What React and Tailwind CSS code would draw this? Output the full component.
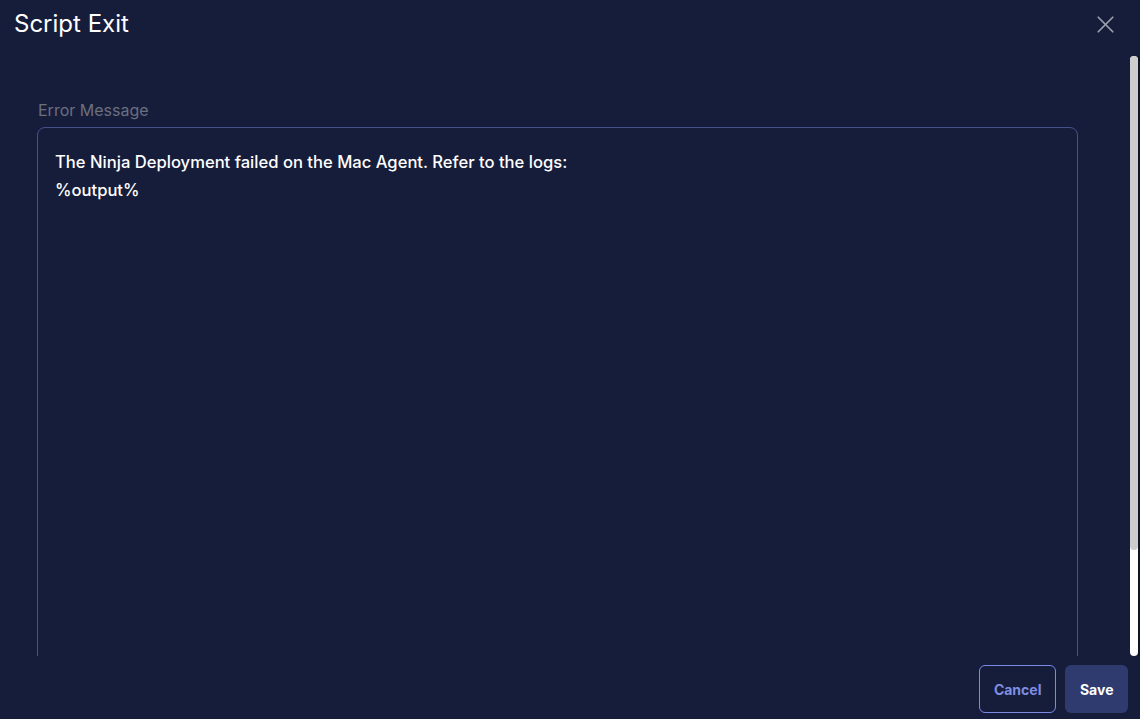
import { X } from 'lucide-react';

export default function App() {
  return (
    <div className="w-[1140px] h-[719px] bg-[#161d3b] flex flex-col overflow-hidden font-['Inter',sans-serif]">
      {/* header */}
      <div className="h-[48px] flex items-center justify-between pl-[14px] pr-[20px]">
        <h1 className="text-[24px] text-white leading-none">Script Exit</h1>
        <X className="w-[29px] h-[29px] text-[#9ba0ad]" strokeWidth={1.4} />
      </div>

      {/* body */}
      <div className="flex h-[600px] mt-[8px]">
        <div className="flex-1 overflow-hidden pl-[37px] pr-[52px] pt-[44px]">
          <label className="block text-[16px] leading-[20px] text-[#6b6f7e] pl-[1px] mb-[7px]">Error Message</label>
          <div className="h-[700px] rounded-lg border border-[#46518a] px-[17px] pt-[20px] text-white text-[16.6px] leading-[28px] font-medium">
            <p>The Ninja Deployment failed on the Mac Agent. Refer to the logs:</p>
            <p>%output%</p>
          </div>
        </div>
        <div className="w-[8px] bg-white rounded-full">
          <div className="h-[494px] bg-[#cdcdcd] rounded-full" />
        </div>
        <div className="w-[2px] bg-[#0f1429]" />
      </div>

      {/* footer */}
      <div className="flex justify-end gap-[9px] pr-[12px] pt-[9px]">
        <button className="h-[48px] px-[14px] rounded-md border border-[#7b8ae6] text-[#7f8ee0] text-[14px] font-bold">
          Cancel
        </button>
        <button className="h-[48px] px-[14.5px] rounded-md bg-[#2f3b6f] text-white text-[14px] font-bold">
          Save
        </button>
      </div>
    </div>
  );
}
